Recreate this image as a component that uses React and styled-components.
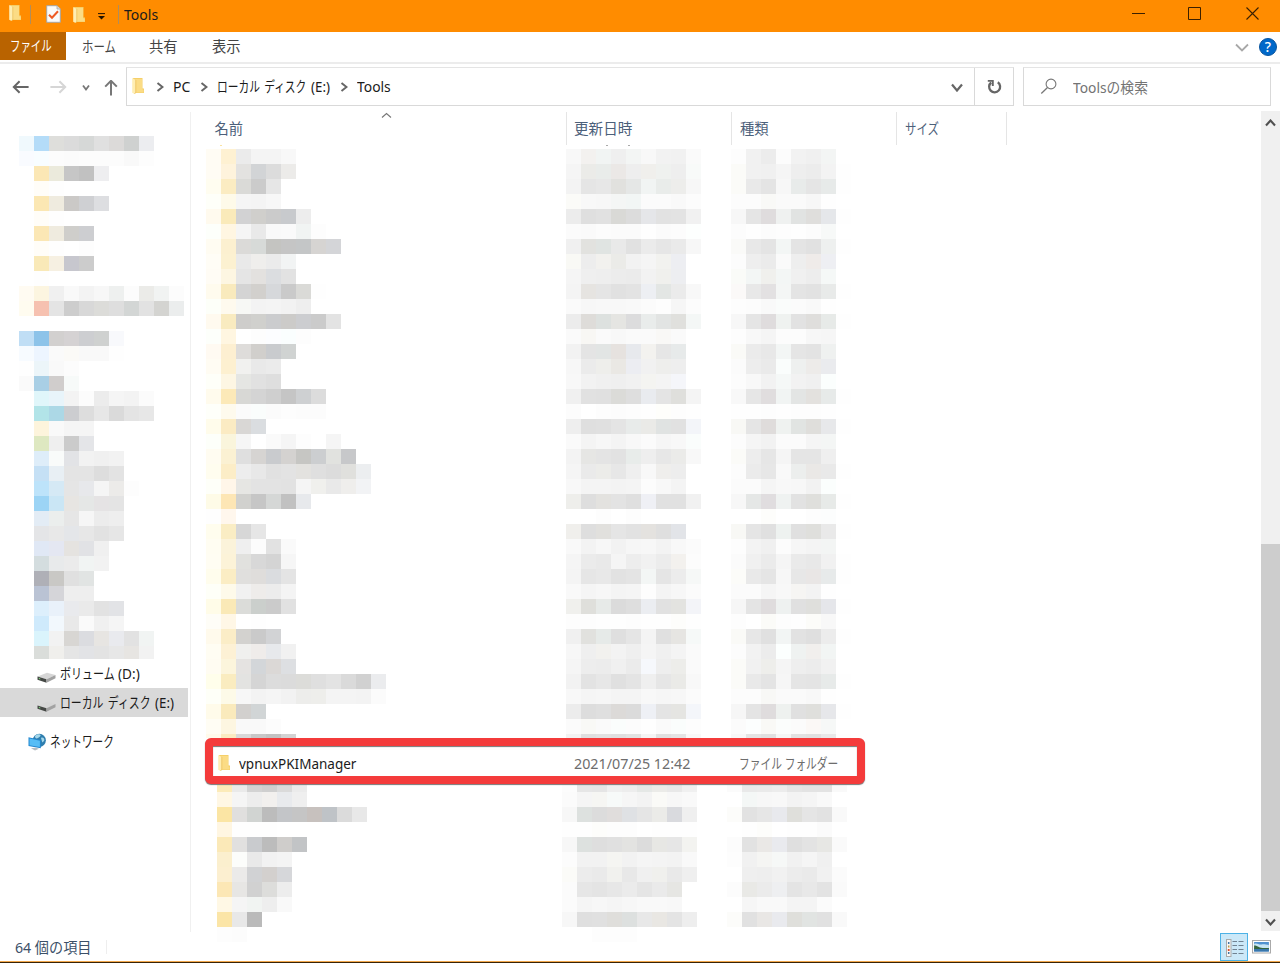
import React from "react";
import styled, { createGlobalStyle } from "styled-components";

const Global = createGlobalStyle`
  * { box-sizing: border-box; }
  body { margin: 0; background: #fff; overflow: hidden; }
  svg { display: block; flex: none; }
`;

const Window = styled.div`
  width: 1280px;
  height: 963px;
  display: flex;
  flex-direction: column;
  background: #fff;
  color: #1b1b1b;
  font-family: "Noto Sans", "Noto Sans CJK JP", sans-serif;
  font-size: 14.3px;
  line-height: 20px;
  white-space: nowrap;
  overflow: hidden;
`;

const Label = styled.span`
  display: block;
  flex: none;
  width: ${(p) => p.$w}px;
  margin-left: ${(p) => p.$ml || 0}px;
  margin-top: ${(p) => p.$mt || 0}px;
  color: ${(p) => p.$color || "inherit"};
  font-size: ${(p) => p.$size || 14.3}px;
  word-spacing: ${(p) => p.$ws || 0}px;
  transform: scaleX(${(p) => p.$sx || 1});
  transform-origin: 0 50%;
`;

/* ---------- title bar ---------- */
const TitleBar = styled.header`
  flex: none;
  height: 32px;
  background: #ff8c00;
  display: flex;
  align-items: flex-start;
  justify-content: space-between;
`;
const TitleLeft = styled.div`
  display: flex;
  padding: 4px 0 0 8px;
`;
const Divider = styled.i`
  width: 1px;
  height: 19px;
  margin: 1px 0 0 ${(p) => p.$ml}px;
  background: #b08d5c;
`;
const Spaced = styled.div`
  flex: none;
  margin: ${(p) => p.$mt || 0}px 0 0 ${(p) => p.$ml || 0}px;
`;
const Caption = styled.div`
  display: flex;
  gap: 43px;
  padding: 7px 21px 0 0;
`;

/* ---------- ribbon ---------- */
const Ribbon = styled.nav`
  flex: none;
  height: 32px;
  display: flex;
  border-bottom: 2px solid #ececec;
  color: #444;
`;
const FileTab = styled.div`
  width: 66px;
  height: 28px;
  padding: 4px 0 0 10px;
  background: #b96300;
  color: #fff;
`;
const RibbonRight = styled.div`
  margin-left: auto;
  display: flex;
  padding: 6px 3px 0 0;
`;
const Help = styled.div`
  width: 18px;
  height: 18px;
  margin-left: 10px;
  border-radius: 50%;
  border: 1px solid #0a559f;
  background: #0068c9;
  color: #fff;
  font-size: 14px;
  font-weight: 500;
  line-height: 16px;
  text-align: center;
`;

/* ---------- address row ---------- */
const AddressRow = styled.div`
  flex: none;
  height: 47px;
  padding: 3px 9px 0 0;
  display: flex;
`;
const NavButtons = styled.div`
  width: 126px;
  display: flex;
  padding: 12px 0 0 12px;
`;
const Field = styled.div`
  width: ${(p) => p.$w}px;
  height: 39px;
  margin-left: ${(p) => p.$ml || 0}px;
  border: 1px solid #d9d9d9;
  border-top-color: #e4e4e4;
  display: flex;
`;
const Refresh = styled.div`
  width: 38px;
  margin-left: 11px;
  border-left: 1px solid #d9d9d9;
  padding: 11px 0 0 12px;
`;

/* ---------- body ---------- */
const Body = styled.div`
  flex: none;
  height: 821px;
  display: flex;
`;
const Sidebar = styled.aside`
  width: 191px;
  border-right: 1px solid #f0f0f0;
  margin-top: 1px;
  padding-top: 24px;
`;
const TreeItem = styled.div`
  height: ${(p) => p.$h}px;
  width: 188px;
  margin-top: ${(p) => p.$mt || 0}px;
  padding-left: ${(p) => p.$pl}px;
  display: flex;
  align-items: center;
  background: ${(p) => (p.$selected ? "#d9d9d9" : "transparent")};
`;
const Pane = styled.main`
  width: 1070px;
  padding-top: 1px;
`;
const HeaderRow = styled.div`
  display: flex;
  height: 33px;
`;
const HeaderCell = styled.div`
  width: ${(p) => p.$w}px;
  padding: 7px 0 0 ${(p) => p.$pl || 8}px;
  border-right: 1px solid #e5e5e5;
  color: #4c607a;
  display: flex;
`;
const ClippedMarks = styled.div`
  height: 4px;
  display: flex;
`;
const Mark = styled.i`
  width: 2px;
  height: 1px;
  margin-left: ${(p) => p.$ml}px;
  background: ${(p) => p.$c};
`;
const Columns = styled.div`
  display: flex;
  height: ${(p) => p.$h}px;
  padding-left: ${(p) => p.$pl}px;
  overflow: hidden;
`;
const Shift = styled.div`
  margin-top: -7px;
`;

const MosaicGrid = styled.div`
  width: ${(p) => p.$w}px;
  height: ${(p) => p.$h || "auto"};
  margin-left: ${(p) => p.$ml || 0}px;
  overflow: hidden;
  flex: none;
`;
const MosaicRow = styled.div`
  display: flex;
  height: 15px;
`;
const Cell = styled.i`
  width: 15px;
  height: 15px;
  background: ${(p) => p.$c};
`;

const FocusRow = styled.div`
  position: relative;
  z-index: 1;
  width: 660px;
  height: 46px;
  margin-left: 14px;
  border: 8px solid #f43b3b;
  border-radius: 6px;
  background: #fff;
  box-shadow: 0 1px 1px #777, inset 0 1px 1px #777;
  display: flex;
  align-items: center;
  padding-left: 4px;
  color: #6d6d6d;
`;

const Scrollbar = styled.div`
  width: 19px;
  height: 820px;
  background: #f0f0f0;
  display: flex;
  flex-direction: column;
  justify-content: flex-end;
`;
const ArrowUp = styled.div`
  padding: 8px 0 0 4px;
  margin-bottom: auto;
`;
const Thumb = styled.div`
  height: 367px;
  background: #cdcdcd;
`;
const ArrowDown = styled.div`
  height: 20px;
  padding: 7px 0 0 4px;
`;

const StatusBar = styled.footer`
  height: 31px;
  display: flex;
  border-bottom: 1px solid #3a2305;
  box-shadow: inset 0 -1px 0 #f2a84c;
  padding: 1px 9px 0 15px;
  color: #3c5068;
`;
const ViewActive = styled.div`
  width: 28px;
  height: 28px;
  margin-left: auto;
  border: 1px solid #4db2e6;
  background: #cbe8f8;
  padding: 5px 0 0 5px;
`;

/* Two digits give a grey, six digits a full colour, a dot an empty cell. */
const color = (t) =>
  t === "." ? "transparent" : t.length === 2 ? `#${t}${t}${t}` : `#${t}`;

function Mosaic({ data, w, ml, h }) {
  return (
    <MosaicGrid $w={w} $ml={ml} $h={h}>
      {data
        .trim()
        .split("\n")
        .map((line, i) => (
          <MosaicRow key={i}>
            {line
              .trim()
              .split(/\s+/)
              .map((t, j) => (
                <Cell key={j} $c={color(t)} />
              ))}
          </MosaicRow>
        ))}
    </MosaicGrid>
  );
}

const TREE = `
f0f9fd b4dcf8 dededb db d6d8d7 e0 dcdad9 cfd1d0 ecedf0
f9fbff f8fdff fc fb fc fc fc f9 fd
. fbe7b5 ebeadc c6 c1 eeeef0
. fffdf8 fe
. fbe7b3 efebdf cbc9c7 cfd0d3 dddee1
. fffdf8 fe
. fbe7b5 efebdf cfcecb cdced1
. fffdf8 fe . fd
. f9e9b8 f6f0e2 c7c7ce cc
. fe
fffbf2 fcf5e0 f0 f9 f3 f7 eef0ef fc ebebe8 f1f3f2 fc
fffcf0 f6c1b0 e4 cd d8 dcdcd9 de d3d6d5 e2 d4d4d1 ebeded
.
c0def5 8dc3e9 d2d0cf d5d2d3 cdced1 cfd1d0 f8f9fc
f7fbff edf5ff fa fbfaf7 f9 f9 fe
fe ecf5f9 f9 fc
fa a9cfe5 d0cdcc f7faf9
. e0f6fa e8f4fa f3 fc ec f5 f3 fb
. b2e4e8 acd8e6 cccdd0 dd e7 da e4 e7
. fdf4dc f9 f5 f5
. dee8c1 ef cb e4e5e8
. deedf9 f9fbfa e2e3e6 f2 f0 f2
. c5e0f5 e8eff4 e4 e4 dd e3
. bde3fa d5e9f5 e5 e7e8eb f5 ecebe9 fd
. 9cd4f5 cae6f5 e7e5e2 e5e7e6 e5e3e4 e4
. e3ecf5 ebeeed e6 f6 ec ee
. e4e5e7 e8 e4e6e9 e7 e2 e6
. e0e8f5 e4e7f2 e5e3e0 e1e2e5 f0
. d4dddf e8eaeb eb f1f4f3 f2
. afb0b7 c9c8c5 e0 e1e4e3
. bac3d4 d5d5d9 ee ee
. ddeffc e9f1fa e9eaed ea e2 e2e3e6
. cfeafc f2f8fd e9 fa f0 f5
. daf4fc f2 d8d6d3 dbdce0 e7e5e2 e9eaee e2 f1f4f3
. daddda f0efec e5 e2e3e6 e3 e7 e7e5e2 f2`;

const NAMES = `
fffcf4 fef1d2 eb f4 f4 f8
fffcf4 fef3dc e3e2e0 d2d4d6 dc ecebe9
fffdf0 fbecc2 dadad7 cb e6
fefff9 fefae9 f5 f4 f7
fffaee faeaba d2d2d3 d0cfcc cb c8cacd ed
fdfffb fff6e2 f5 e9 f9 fa f1f4f3 fd
fffcf2 fcf0d0 dbdad8 d7dad8 c4c4c1 c5 c4c6c7 d6d4d2 d4d5d8
fffdf6 fcf1d1 e9 efeeec eb f2f4f4
fffcf5 fdf6e2 e5 e3e1df dbdde0 e2
fffbee f9eabd d4 d2d0cd d6d8db ca dadad7 fe
fdfff9 fefaee f7f8f5 f3 f4 f2 ee
fffaef f9ebc0 cecdcb d0d0cd cbccce cccbc9 cccdd0 cb e3
fdfffb fff6e1 . fd fcfdff fafefe fd
fffaf2 fdefd1 dedcda d1cfcc c9cbce d0d3d2
fffcf3 fdf0d0 f1f1ef e9 eb
fefff9 fdf6e3 e5e6e3 e1 de
fffbed fce9b8 d8d8d5 d4 cf c5 ced0d2 dc
fefffa fefaed fb fafdfc fb fd fc fc
fffceb fbebc3 d9d7d5 dadde0
fdfffa faf5dc f6 . fa f5 fd . f5
fffcf1 fbf1d3 df d6d4d2 c9cbce d4d2d0 c6c6c3 ccced0 e1e2df c7c8ca
fffdef fcedc7 ed e8 e1 e3 e3e2df df dc e0e0dd eceef0
fefff9 fff6e9 e6e6e3 e3 e3 e2 f5 f0f0ed e9 efeeec f2f3f5
fefbe7 fde6b5 d1d1ce c6 d5d7d6 c1 e7e9ec
fe fff7ed
fffdee faedc4 d7 e6
fffdf2 fbf3da ef fc e2 fa
fffdf3 fcf3d8 e1e1de d8 d4 f6
fffded fbedc4 e0dfdd dfdddb dadcdf e4
fefff8 fefaea f1 eeecea ec f4
fffce8 fae9b7 dbdcd9 cbcfcc cb e1
fefdf7 fff7e6 . fe
fffaec fbedc7 d3d2cf ca d2d3d5
fffdf3 fdf1d5 f0f0ee efecea e7e9ec f1
fffcf2 fcf5dc e5e3e1 d3d6d9 dbd8d6 dddfe2
fffeeb faecc0 e3e3e1 d5 dc db dcdcd9 df e3 da d1 ebecee
fefff8 fdfae8 f7 f3 f5 f2 ededeb eeeeeb f4 f4 f3 fb
fffbea faeabc d2d0ce d1d5d6
fffdf4 fdf6e1 f9 f9 fc
fffaeb faebc2 d8 c8 c2 d3`;

const DATES = `
f8 f3f1ef f1f4f3 ef f3f5f4 f8 f2 f1 fa
f5 ebebe8 e9ecea ebe8e6 ee f0efec eff1ef ee f8faf9
f3 e5 e7 e1e1de e5e7e6 f1f4f3 e9ecea ededeb f7
fbfbf8 f8 f7 f4f6f5 f2f6f5 fb fb f9 fc
ec df e1 d9d9d6 dc e5e6e9 e2 e3 f1
fb fa fc fb fb fe fb fc fdfffe
f0 e2e2df e0e4e2 e9 e1 eb e6 ea f7
f9f9f5 ed f2f1ee ebebe8 f2 f5 f2f2ef edeef2
f5 ef ee ec eb f2 f0f0ed edeef1
f4 e6e4e1 e5 e1 e3 edeff3 e3e6e4 eb f8
fa f7 f8 f8 f9 fb fd f6 fc
ec dedcd9 dde1df e5e5e2 dcdcdd e9eceb e2e4e3 e0e0dd f4f7f6
fa f8f7f4 fa f8 fa fa f9f8f6 fa
f2 e4 e2e5e4 e6e2df e7e9ed f3f2ef e6 e7eaea
f7 eb eeeeeb eae8e4 ecedf2 f1 eeeeec ee
f8 f2 f0 ef f1 f4f4f1 f4 f5f6fa
f0 e1 e0 dbdbd8 de e9ebef e4 dfdfdc f4
fc . fd fc fd fe fefefb fd fe
ee df e0 e4 e8ebea eaeae7 e0e3e2 e1 f3f5f9
fa f4 f7 f4 f8 fb f6 f8 fafdfc
f3 e6e6e4 e4 e2 e8ecea ee e7 ebebe9 f8
f5 ea ecece9 e7 ef f8 efeeec ed
f8 f4 f4 f3 f4 fc f8 f4
eeeeeb de e3e2df e3 df eff0f5 e1 e1 f1
. . fd . fd . . . .
f0efec de e1e0dd e5 e2 e4e2df df e2e4e8
f9 f3 f7 f2 f6 f7 f3 f8 fb
f5 eb e9 f5 ed f1 ec f3f1ee fc
f4 e6 e8 e2 e4 f3f6f5 e5 ec f6f8f7
f9 f5 f7 f4 f5 fd f4 f7 fb
f0f0ed dfdfdb e7eae8 db de ebedf1 e1 e3e3e0 f3f4f8
fd fd fe fe fd fe fe fdfdfb fe
f0 e1e1de e6eae8 df e5 f4 e0 e6e5e2 f6f9f8
f7 ef f2f1ee f3 ef f5 f0 f4 fa
f5 ed ec f0 eb f6f8fc ee ededea fa
f2 e3 e7 e0 e4 ef e6 eaeae7 f8
f8 f5 f6 f4 f4 f8 f6 f7 fb
ec dd df dcdad8 db eef0f5 e4 e5e5e2 f4f6fa
fb f9f9f6 fa fafdfc fc fe fa fafdfc fd
f2 df e1 df e1e3e2 f4 e0 e4 f8`;

const TYPES = `
fd f1 ec fc f2 f0 f3f5f4 .
fbfbf8 f1 f0 f5 ee ec f3 fe
fbfbf8 e9 e4 f7 e8ebea e5 e7eae9 fe
fc fc f9f9f7 fa fa f7 fe .
f7 e5 dfdcdd eff1f0 e1e3e2 dfdedc e5e7ea fe
fc fe fc fd fe fc f7f9f8 .
fafaf8 e8 e4 f3f6f5 e4 e1 eef0ef fe
fc ee eb fa ee efebe9 eeeff3 .
fafbf8 f3f6f5 f0f0ed f3f6f5 f0 ed f5f8f7 .
fbf9f8 e8 e3e1e2 f4f6f5 e4 e2 e8eae9 fe
fd fc f9 fafcfb fb f9 fe .
f7 e5 dfdcdd eff2f0 e2 dfdedc e7eae8 fe
fd f8 f5 fc fc f7 f6 .
fafaf7 eb e8 f3f6f5 e5 e3 eff1f0 .
fb ed ea fafdfc eef0ef edebe9 eaebee .
fc f8 f2 f5f8f7 f2 f0 fbfefd .
f8 e6 e0ddde f1f4f3 e3e5e4 e3e1de e7eae9 fe
fe fe fd fe fd fd fe .
f8f8f5 e5 dfdcdb eff2f0 e1e4e2 dfdedb e7e8ea fe
fc f5 f2 fb fb f5 f4f6f5 .
fbfbf8 ed e6 f5 e5 e5 ef .
fc eb e7 f9 eceeed eae8e6 e9 fe
fb fb f5 f8 f7 f2 fbfefd .
f7 e5e7e6 e0dddf eff2f1 e2 dfdfdc e7eae8 fe
. . fdfdfb . . fd fcfdfd .
f8f8f5 e5 e0 eef2f0 e0 dfdfdc e9 fe
fd f3 f0 fc f6 f4 f3f5f4 .
fb f0 eb f5 ea e8 f1 fe
fcfcf9 e9 e5 f7 e7 e9e6e5 e7eaea fe
fb fb f5 f8 f6f5f3 f3 fe .
f6 e4 dfdcdd eef1f0 e0 dfdfdc e5e6ea fe
fd . fbfbf8 fd fe fcfcf9 f8 .
fafaf7 e7 e0 f2f5f4 e2 df ec fe
fc f2 ec fcfffe eff2f1 f1efed f2f5f4 .
fbfbf8 f1 eeeeeb f5 ee ec f1 .
fbfbf8 e9 e4 f6 e5 e4 e7eae9 fe
fc fc f8f8f6 fa fa f8 fe .
f6 e4 dfdcdd eef1ef e0 dfdfdc e6e7ea fe
fb fcfefe f9f9f6 fbfdfc fb fbf8f6 f6f8f7 .
f7 e4 e0 f4f6f5 e2 e0 e8 fe`;

const NAMES_END = `
fcebb9 ea d3 cf da eb
fff7e4 f5 ed f2f0ee e8eaed ef
fbe5a4 e0dfde d1d4d2 bc c3c5c8 c5 c7c1be bfc3c7 db e8
fff6e2 fe fe fe
fbe9b8 e1e0df c9cbce bc cfcdcb c2c4c6
fbefce fcfdfb e9 f2 f4
fcefd0 ebeae9 d1d2d4 d3d0ce d6d7da
fce7b5 e7e6e4 d1 dddddb ed
fff8e5 f5 f1f4f2 ee f9
fbe5a7 e8 ba
fd fc`;

const DATES_END = `
fc e6 e5 ef ed e5e8e6 ebebe8 e8 f0
fb f5 f6f6f3 f7faf9 f6 f3 fafaf7 f7 f9
f7 dde1df dc e0dddc dfe1e4 e5 ebebe8 d9dade ef
fe fe fdfdfb fd fd . fe fe fe
f7 dde1df de e0 e3e3e1 dc e7e7e4 e6 f3f3f0
fc f2 f2 f5f5f2 f2 f5 f4 f3 f9
fbfbf8 ec ea f1f1ee e8 f0 f0f0ed e9 ef
fb e6 e4 e7 eb e5 ea e6e6e3
fb f5 f7 f5 f7 f9 f9 f8
f7 df e0 dfdedb dde0df e8 e9e7e3 e4 ee
. . fd fd fd`;

const TYPES_END = `
fb e9 ea ec e5 e3 e3 f9
. f4f7f6 f7 f8 f3 f5 f9 .
fcfcfa e2 e6 e8e9ed dfdfdb e5 e2 f9
. fe fdfdfb . fe fe fb .
fc e2 eae8e6 e9eaee df e3 e7e7e4 fa
fd f1 f5f5f3 f6f8f7 f1 f5 f0 .
. ef ee f1 ec ea f1 fb
fc e9e9e6 eb eeeff1 e4 e8 e3 fa
. f6 f9 f9 f4 f4 fb .
fcfcfa e1 e9e7e5 e9eaee dfdfdb e1e4e2 e1 f9`;

/* ---------- icons ---------- */
const Folder = ({ h = 18 }) => (
  <svg width="14" height={h} viewBox="0 0 14 18">
    <path d="M2 1h9.500v10.500H13V16H3z" fill="#f5cf69" />
    <path d="M4.500 2h6.500v10L12.600 13v2.500H5z" fill="#fbdc85" />
    <path d="M1.200 1 4.800 3v12.200L3.600 17 1.200 15.700z" fill="#ffeeb3" />
    <path d="M4.800 3v12.200L3.600 17" fill="none" stroke="#e9bd55" strokeWidth=".7" />
  </svg>
);
const Chevron = ({ d = "right", w = 8, h = 10, c = "#666", s = 2 }) => {
  const paths = {
    right: `M1.5 1 L${w - 1.5} ${h / 2} L1.5 ${h - 1}`,
    down: `M1 1.5 L${w / 2} ${h - 1.5} L${w - 1} 1.5`,
    up: `M1 ${h - 1.5} L${w / 2} 1.5 L${w - 1} ${h - 1.5}`,
  };
  return (
    <svg width={w} height={h}>
      <path d={paths[d]} fill="none" stroke={c} strokeWidth={s} />
    </svg>
  );
};
const Arrow = ({ c, rotate = 0 }) => (
  <svg width="18" height="16" viewBox="0 0 18 16">
    <g transform={`rotate(${rotate} 9 8)`} fill="none" stroke={c} strokeWidth="2">
      <path d="M1.800 8H16.600M7.600 2.200 1.800 8 7.600 13.800" />
    </g>
  </svg>
);
const Drive = () => (
  <svg width="19" height="11" viewBox="0 0 19 11">
    <path d="M.5 4.500 10 .8 18.500 3 9.500 7.200z" fill="#d6d6d6" />
    <path d="M.5 4.500 9.500 7.200v3.500L.5 7.800z" fill="#454845" />
    <path d="M9.500 7.200l9-4.200v3.200l-9 4.500z" fill="#a2a2a2" />
    <path d="M1.800 6.400l1.500.5" stroke="#79d779" strokeWidth="1" />
  </svg>
);
const Network = () => (
  <svg width="19" height="18" viewBox="0 0 19 18">
    <circle cx="11.300" cy="7.300" r="6.600" fill="#2f7eae" />
    <path d="M7 3c2-2.500 5-2 5.500-1s-1 2-2.500 3-3 .5-3-2zM13 5c1.500-1 3 0 3.300 1.500s-1 2-2 3z" fill="#a5d7ea" />
    <path d="M.5 4.300 12.800 7v8.300L.5 13.100z" fill="#2387cf" />
    <path d="M1.500 5.500 11.900 7.800v6.300L1.500 12.300z" fill="#56bdf6" />
    <path d="M3 15.200l5-.4 3 1-4 1.700z" fill="#b3bcc2" />
  </svg>
);
const Properties = () => (
  <svg width="15" height="18" viewBox="0 0 15 18">
    <path d="M.7.700h10.300L14.300 4v13.300H.7z" fill="#fafafa" stroke="#a6a6a6" />
    <path d="M11 .7V4h3.300" fill="#ddd" stroke="#a6a6a6" strokeWidth=".8" />
    <path d="M3 9.700 6 12.700 12 6.200" fill="none" stroke="#ee5a24" strokeWidth="2" />
  </svg>
);

export default function App() {
  return (
    <Window>
      <Global />
      <TitleBar>
        <TitleLeft>
          <Folder />
          <Divider $ml={8} />
          <Spaced $ml={15} $mt={1}><Properties /></Spaced>
          <Spaced $ml={11} $mt={2}><Folder /></Spaced>
          <Spaced $ml={12} $mt={9}>
            <svg width="7" height="7" viewBox="0 0 7 7">
              <path d="M0 .6h7" stroke="#241400" strokeWidth="1" />
              <path d="M0 3h7L3.500 6.600z" fill="#241400" />
            </svg>
          </Spaced>
          <Divider $ml={13} />
          <Label $ml={5} $mt={0.5} $w={60} $sx={0.98}>Tools</Label>
        </TitleLeft>
        <Caption>
          <Spaced $ml={-2}>
            <svg width="13" height="13"><path d="M0 6.500h13" stroke="#3b2000" /></svg>
          </Spaced>
          <svg width="13" height="13"><path d="M.5.500h12v12H.5z" fill="none" stroke="#3b2000" /></svg>
          <Spaced $ml={2}>
            <svg width="13" height="13"><path d="M.5.500l12 12M12.500.500l-12 12" stroke="#3b2000" strokeWidth="1.100" /></svg>
          </Spaced>
        </Caption>
      </TitleBar>

      <Ribbon>
        <FileTab><Label $w={50} $sx={0.73}>ファイル</Label></FileTab>
        <Label $ml={16} $mt={5} $w={67} $sx={0.8}>ホーム</Label>
        <Label $mt={5} $w={63}>共有</Label>
        <Label $mt={5} $w={63}>表示</Label>
        <RibbonRight>
          <Spaced $mt={5}><Chevron d="down" w={14} h={9} c="#a8a8a8" s={1.8} /></Spaced>
          <Help>?</Help>
        </RibbonRight>
      </Ribbon>

      <AddressRow>
        <NavButtons>
          <Arrow c="#666" />
          <Spaced $ml={19}><Arrow c="#d6d6d6" rotate={180} /></Spaced>
          <Spaced $ml={15} $mt={5}><Chevron d="down" w={8} h={7} c="#777" s={1.8} /></Spaced>
          <Spaced $ml={12} $mt={1}><Arrow c="#777" rotate={90} /></Spaced>
        </NavButtons>
        <Field $w={888}>
          <Spaced $ml={4} $mt={9}><Folder /></Spaced>
          <Spaced $ml={11} $mt={14}><Chevron /></Spaced>
          <Label $ml={9} $mt={9} $w={26} $sx={0.98}>PC</Label>
          <Spaced $ml={1} $mt={14}><Chevron /></Spaced>
          <Label $ml={9} $mt={9} $w={94} $sx={0.75} $ws={2}>ローカル ディスク</Label>
          <Label $mt={9} $w={21} $sx={0.93}>(E:)</Label>
          <Spaced $ml={8} $mt={14}><Chevron /></Spaced>
          <Label $ml={9} $mt={9} $w={594} $sx={0.97}>Tools</Label>
          <Spaced $mt={15}><Chevron d="down" w={12} h={9} s={2.200} /></Spaced>
          <Refresh>
            <svg width="16" height="17" viewBox="0 0 16 17">
              <path d="M4.200 3.500a5.500 5.500 0 1 0 6.600-.2" fill="none" stroke="#666" strokeWidth="2.300" />
              <path d="M.8 1.900h5v5" fill="none" stroke="#666" strokeWidth="1.900" />
            </svg>
          </Refresh>
        </Field>
        <Field $w={248} $ml={9}>
          <Spaced $ml={16} $mt={10}>
            <svg width="18" height="17" viewBox="0 0 18 17">
              <circle cx="11" cy="6" r="4.900" fill="none" stroke="#777" strokeWidth="1.100" />
              <path d="M7.500 9.500 1.300 15.500" stroke="#777" strokeWidth="1.300" />
            </svg>
          </Spaced>
          <Label $ml={15} $mt={9.5} $w={90} $color="#737373" $sx={0.965}>Toolsの検索</Label>
        </Field>
      </AddressRow>

      <Body>
        <Sidebar>
          <Mosaic data={TREE} w={171} ml={19} h="523px" />
          <TreeItem $h={29} $pl={37}>
            <Spaced $mt={7}><Drive /></Spaced>
            <Label $ml={4} $w={57.5} $sx={0.77}>ボリューム</Label>
            <Label $w={24} $sx={0.95}>(D:)</Label>
          </TreeItem>
          <TreeItem $h={29} $pl={37} $selected>
            <Spaced $mt={7}><Drive /></Spaced>
            <Label $ml={4} $w={94.5} $sx={0.76} $ws={2}>ローカル ディスク</Label>
            <Label $w={24} $sx={0.93}>(E:)</Label>
          </TreeItem>
          <TreeItem $h={29} $pl={28} $mt={10}>
            <Network />
            <Label $ml={3} $w={110} $sx={0.745}>ネットワーク</Label>
          </TreeItem>
        </Sidebar>

        <Pane>
          <HeaderRow>
            <HeaderCell $w={376} $pl={23.5}>
              <Label $w={166.5}>名前</Label>
              <Spaced $mt={-7}><Chevron d="up" w={11} h={7} c="#777" s={1.1} /></Spaced>
            </HeaderCell>
            <HeaderCell $w={165} $pl={7}><Label $w={60} $sx={1.02}>更新日時</Label></HeaderCell>
            <HeaderCell $w={165}><Label $w={60}>種類</Label></HeaderCell>
            <HeaderCell $w={110}><Label $w={60} $sx={0.8}>サイズ</Label></HeaderCell>
          </HeaderRow>
          <ClippedMarks>
            <Mark $ml={29} $c="#fbe3a0" />
            <Mark $ml={384} $c="#aaa" />
            <Mark $ml={20} $c="#aaa" />
          </ClippedMarks>
          <Columns $h={589} $pl={15}>
            <Mosaic data={NAMES} w={360} />
            <Mosaic data={DATES} w={165} />
            <Mosaic data={TYPES} w={120} />
          </Columns>
          <FocusRow>
            <Spaced $mt={3}><Folder /></Spaced>
            <Label $ml={8} $mt={6} $w={335} $sx={0.945} $color="#1b1b1b">vpnuxPKIManager</Label>
            <Label $mt={6} $w={165}>2021/07/25 12:42</Label>
            <Label $mt={6} $w={105} $sx={0.75}>ファイル フォルダー</Label>
          </FocusRow>
          <Columns $h={158} $pl={26}>
            <Shift><Mosaic data={NAMES_END} w={345} /></Shift>
            <Shift><Mosaic data={DATES_END} w={165} /></Shift>
            <Shift><Mosaic data={TYPES_END} w={120} /></Shift>
          </Columns>
        </Pane>

        <Scrollbar>
          <ArrowUp><Chevron d="up" w={11} h={8} c="#505050" s={2.1} /></ArrowUp>
          <Thumb />
          <ArrowDown><Chevron d="down" w={11} h={8} c="#505050" s={2.1} /></ArrowDown>
        </Scrollbar>
      </Body>

      <StatusBar>
        <Label $mt={5} $w={91} $sx={0.99}>64 個の項目</Label>
        <Spaced $mt={7}>
          <svg width="1" height="14"><path d="M.5 0v14" stroke="#eee" /></svg>
        </Spaced>
        <ViewActive>
          <svg width="19" height="19" viewBox="0 0 19 19">
            <rect x=".5" y=".5" width="4.500" height="17" fill="#f8f8f8" stroke="#aaa" />
            <path d="M2.700 3v2M2.700 13v2" stroke="#3f75a5" strokeWidth="1.500" />
            <path d="M2.700 6.500v2" stroke="#b99a48" strokeWidth="1.500" />
            <path d="M2.700 10v2" stroke="#e14b28" strokeWidth="1.800" />
            <path d="M6.500 2.500h4.500m1.500 0h5M6.500 6.500h4.500m1.500 0h5M6.500 10.500h4.500m1.500 0h5M6.500 14.500h4.500m1.500 0h5" stroke="#708291" />
          </svg>
        </ViewActive>
        <Spaced $ml={4} $mt={7}>
          <svg width="19" height="14" viewBox="0 0 18 14" preserveAspectRatio="none">
            <rect x=".5" y=".5" width="17" height="12.500" fill="#fff" stroke="#aaa" />
            <path d="M2 2h14v9.500H2z" fill="#4f91d0" />
            <path d="M2 4c3-1.500 4 1 7 .5s4 .5 7 .5v3H2z" fill="#c7e4f3" />
            <path d="M2 5.500c3 0 4 2 8 2.500h6v1.500H2z" fill="#35653e" />
            <path d="M2 9h14v2.500H2z" fill="#3977ad" />
          </svg>
        </Spaced>
      </StatusBar>
    </Window>
  );
}
